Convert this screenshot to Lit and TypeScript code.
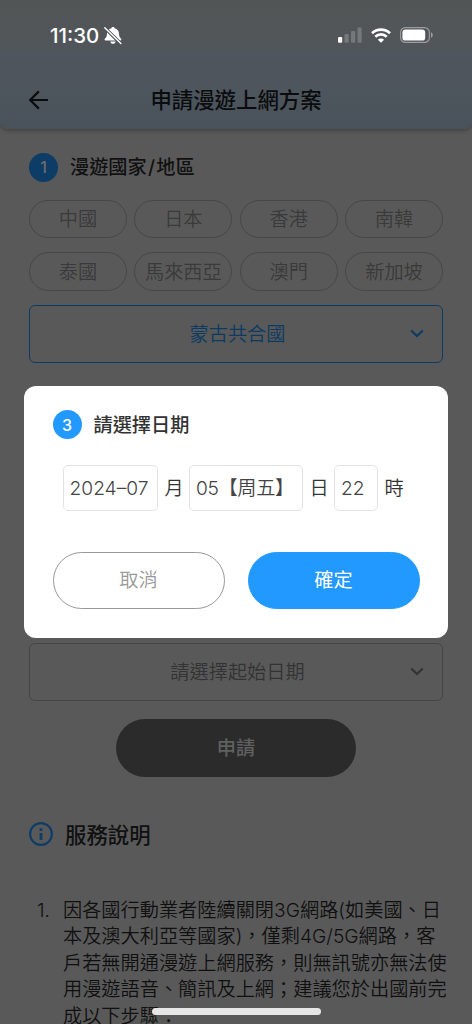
import { LitElement, html, css, svg } from "lit";
import { customElement } from "lit/decorators.js";

const COUNTRIES = ["中國", "日本", "香港", "南韓", "泰國", "馬來西亞", "澳門", "新加坡"];

const NOTICE = [
  "因各國行動業者陸續關閉3G網路(如美國、日",
  "本及澳大利亞等國家)，僅剩4G/5G網路，客",
  "戶若無開通漫遊上網服務，則無訊號亦無法使",
  "用漫遊語音、簡訊及上網；建議您於出國前完",
  "成以下步驟：",
];

const chevron = html`<svg class="chevron" width="14" height="9" viewBox="0 0 14 9">
  <path d="M1.200 1.400 7 7l5.800-5.600" fill="none" stroke="currentColor" stroke-width="2.100"/>
</svg>`;

@customElement("app-root")
export class AppRoot extends LitElement {
  static styles = css`
    :host {
      display: block;
      position: relative;
      width: 472px;
      height: 1024px;
      overflow: hidden;
      background: #595959;
      font-family: Inter, "Noto Sans CJK TC", sans-serif;
      font-size: 19.2px;
      font-weight: 350;
      line-height: 26px;
      color: #111;
    }
    * { box-sizing: border-box; }
    svg { display: block; flex: none; }
    .header {
      height: 129px;
      border-radius: 0 0 8px 8px;
      background: linear-gradient(#515555 0, #525659 38px, #4f555d 56px, #4d555d 90px, #49525a 129px);
      box-shadow: 0 1px 5px rgba(0, 0, 0, 0.35);
    }
    .status {
      height: 70px;
      padding: 0 39px 0 50px;
      display: flex;
      align-items: center;
      color: #fff;
    }
    .time { font-size: 20.5px; font-weight: 550; letter-spacing: 0; width: 54px; white-space: nowrap; padding-top: 1px; }
    .signals { margin-left: auto; display: flex; align-items: center; }
    .wifi { margin-left: 9px; }
    .battery { margin-left: 9px; }
    .nav {
      height: 59px;
      display: grid;
      grid-template-columns: 76px 1fr 76px;
      align-items: center;
    }
    .back { margin-left: 28px; }
    .title { text-align: center; font-size: 21.4px; font-weight: 500; color: #0b0c0d; }
    .content { padding: 23.500px 29px 0; }
    .step { display: flex; align-items: center; gap: 12px; height: 29px; font-weight: 500; }
    .slash { margin: 0 1.200px; }
    .num {
      width: 29px; height: 29px; border-radius: 50%;
      display: flex; align-items: center; justify-content: center;
      background: #0d3d66; color: #6b6b6b; font-size: 16px; font-weight: 500;
    }
    .chips {
      margin-top: 18px;
      display: grid;
      grid-template-columns: repeat(4, 98px);
      justify-content: space-between;
      row-gap: 14px;
      color: #3a3a3a;
    }
    .chip {
      height: 38.500px; border: 1px solid #474747; border-radius: 20px; padding-top: 1px;
      display: flex; align-items: center; justify-content: center; white-space: nowrap;
    }
    .select {
      height: 58px; border: 1px solid #454545; border-radius: 6px; color: #333;
      display: grid; grid-template-columns: 50px 1fr 50px; align-items: center; text-align: center;
    }
    .select .chevron { justify-self: center; }
    .select .label { grid-column: 2; padding-left: 3px; }
    .country { margin-top: 14px; border-color: #0b3a63; color: #0b3a63; }
    .start { margin-top: 280px; }
    .apply {
      width: 240px; height: 58px; margin: 18px auto 0; border-radius: 29px;
      background: #2b2b2b; color: #606060; font-weight: 500;
      display: flex; align-items: center; justify-content: center;
    }
    .info { margin-top: 43px; height: 28px; display: flex; align-items: center; gap: 12px; font-size: 21.4px; font-weight: 500; }
    .info span { padding-top: 2px; }
    .notice { margin-top: 49.300px; display: flex; line-height: 26.500px; color: #101010; }
    .index { width: 34px; padding-left: 8px; flex: none; }
    .line { white-space: nowrap; }
    .modal {
      position: absolute; left: 24px; top: 386px; width: 424px; height: 252px;
      padding: 24px 28.500px; border-radius: 12px; background: #fff; color: #333;
    }
    .modal .num { background: #2299ff; color: #fff; }
    .date { display: flex; align-items: center; margin: 26px 0 0 10px; height: 46px; }
    .field {
      height: 46px; border: 1px solid #e3e3e3; border-radius: 5px; padding: 0 6px 1px;
      display: flex; align-items: center; color: #444; white-space: nowrap;
    }
    .month { width: 95.500px; }
    .day { width: 114px; letter-spacing: -0.35px; }
    .hour { width: 44px; }
    .unit { width: 31px; text-align: center; padding-left: 1px; }
    .actions { display: grid; grid-template-columns: 172px 172px; justify-content: space-between; margin-top: 40.500px; }
    .btn {
      height: 57.500px; border-radius: 29px; display: flex; align-items: center; justify-content: center;
      border: 1px solid #999; color: #999;
    }
    .ok { border-color: #2299ff; background: #2299ff; color: #fff; font-weight: 400; }
    .home { position: absolute; left: 152px; top: 1008px; width: 169px; height: 6.500px; border-radius: 4px; background: #e6e6e6; }
  `;

  render() {
    return html`
      <header class="header">
        <div class="status">
          <span class="time">11:30</span>
          <svg width="18" height="19" viewBox="0 0 18 19">
            <path fill="#fff" d="M9 1c.9 0 1.500.5 1.600 1.200C13.300 2.900 14.900 4.800 15 7.500c.1 2.800.7 4 2.100 5.300.5.500.5 1.700-.6 1.700H1.500c-1.100 0-1.100-1.200-.6-1.700C2.300 11.500 2.900 10.300 3 7.500c.1-2.700 1.700-4.600 4.400-5.300C7.500 1.500 8.100 1 9 1zM6.300 15.500h5.400c-.3 1.400-1.300 2.300-2.700 2.300s-2.400-.9-2.700-2.300z"/>
            <path d="M.6 1.600 17 17.800" stroke="#525659" stroke-width="3.400"/>
            <path d="M.8 1.700 16.900 17.500" stroke="#fff" stroke-width="1.400" stroke-linecap="round"/>
          </svg>
          <div class="signals">
            <svg width="24" height="16" viewBox="0 0 24 16">
              <rect x="0" y="10" width="4.200" height="5.800" rx="1.200" fill="#fff"/>
              ${[[6.5, 7], [13, 4], [19.5, 0.5]].map(
                ([x, y]) => svg`<rect x=${x} y=${y} width="4.200" height=${15.8 - y} rx="1.200" fill="#75787b"/>`
              )}
            </svg>
            <svg class="wifi" width="20" height="15" viewBox="0 0 20 15" fill="none" stroke="#fff" stroke-width="2.700">
              <path d="M1 5.300a12.800 12.800 0 0 1 18 0"/>
              <path d="M4.300 8.700a8.200 8.200 0 0 1 11.400 0"/>
              <path d="M10 14.800 6.900 11.700a4.400 4.400 0 0 1 6.200 0z" fill="#fff" stroke="none"/>
            </svg>
            <svg class="battery" width="33" height="16" viewBox="0 0 33 16">
              <rect x=".6" y=".6" width="28.800" height="14.800" rx="4.800" fill="none" stroke="#9b9ea0" stroke-width="1.100"/>
              <rect x="2.400" y="2.400" width="22.800" height="11.200" rx="3.200" fill="#fff"/>
              <path d="M31 5.300c2.300.8 2.300 4.600 0 5.400z" fill="#9b9ea0"/>
            </svg>
          </div>
        </div>
        <div class="nav">
          <svg class="back" width="21" height="20" viewBox="0 0 21 20">
            <path d="M20 10H2.400M10.800 1.400 2.200 10l8.600 8.600" fill="none" stroke="#0b0c0d" stroke-width="2.200"/>
          </svg>
          <span class="title">申請漫遊上網方案</span>
        </div>
      </header>
      <main class="content">
        <div class="step"><span class="num">1</span><span>漫遊國家<span class="slash">/</span>地區</span></div>
        <div class="chips">${COUNTRIES.map((c) => html`<span class="chip">${c}</span>`)}</div>
        <div class="select country"><span class="label">蒙古共合國</span>${chevron}</div>
        <div class="select start"><span class="label">請選擇起始日期</span>${chevron}</div>
        <div class="apply">申請</div>
        <div class="info">
          <svg width="24" height="24" viewBox="0 0 24 24">
            <circle cx="12" cy="12" r="10.900" fill="none" stroke="#0d3d66" stroke-width="2.100"/>
            <path d="M10.600 6.200h2.800v2.700h-2.800zM10.600 11h2.800v7h-2.800z" fill="#0d3d66"/>
          </svg>
          <span>服務說明</span>
        </div>
        <div class="notice">
          <span class="index">1.</span>
          <div>${NOTICE.map((l) => html`<div class="line">${l}</div>`)}</div>
        </div>
      </main>
      <section class="modal">
        <div class="step"><span class="num">3</span><span>請選擇日期</span></div>
        <div class="date">
          <span class="field month">2024–07</span><span class="unit">月</span>
          <span class="field day">05【周五】</span><span class="unit">日</span>
          <span class="field hour">22</span><span class="unit">時</span>
        </div>
        <div class="actions">
          <span class="btn">取消</span>
          <span class="btn ok">確定</span>
        </div>
      </section>
      <div class="home"></div>
    `;
  }
}
